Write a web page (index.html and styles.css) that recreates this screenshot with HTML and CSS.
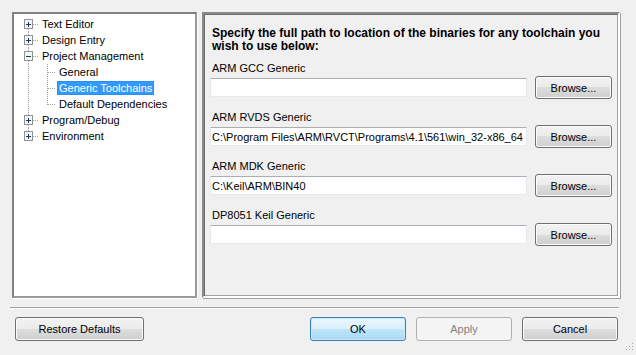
FILE: index.html
```html
<!DOCTYPE html>
<html>

<head>
    <title>Options - Generic Toolchains</title>
    <link rel="stylesheet" href="styles.css">
</head>

<body>
    <div class="main">
        <div class="tree">
            <div class="node">
                <svg class="gutter root" width="26" height="16">
                    <line class="dots" x1="14.5" y1="13" x2="14.5" y2="16" />
                    <line class="dots" x1="19" y1="8.5" x2="25" y2="8.5" />
                    <rect class="box" x="10.5" y="3.5" width="8" height="9" />
                    <path class="sign" d="M12 8.5h5M14.5 6v5" />
                </svg>
                <span class="text">Text Editor</span>
            </div>
            <div class="node">
                <svg class="gutter root" width="26" height="16">
                    <line class="dots" x1="14.5" y1="0" x2="14.5" y2="3" />
                    <line class="dots" x1="14.5" y1="13" x2="14.5" y2="16" />
                    <line class="dots" x1="19" y1="8.5" x2="25" y2="8.5" />
                    <rect class="box" x="10.5" y="3.5" width="8" height="9" />
                    <path class="sign" d="M12 8.5h5M14.5 6v5" />
                </svg>
                <span class="text">Design Entry</span>
            </div>
            <div class="node">
                <svg class="gutter root" width="26" height="16">
                    <line class="dots" x1="14.5" y1="0" x2="14.5" y2="3" />
                    <line class="dots" x1="14.5" y1="13" x2="14.5" y2="16" />
                    <line class="dots" x1="19" y1="8.5" x2="25" y2="8.5" />
                    <rect class="box" x="10.5" y="3.5" width="8" height="9" />
                    <path class="sign" d="M12 8.5h5" />
                </svg>
                <span class="text">Project Management</span>
            </div>
            <div class="node">
                <svg class="gutter child" width="43" height="16">
                    <line class="dots" x1="14.5" y1="0" x2="14.5" y2="16" />
                    <line class="dots" x1="33.5" y1="0" x2="33.5" y2="16" />
                    <line class="dots" x1="34" y1="8.5" x2="42" y2="8.5" />
                </svg>
                <span class="text">General</span>
            </div>
            <div class="node">
                <svg class="gutter child" width="43" height="16">
                    <line class="dots" x1="14.5" y1="0" x2="14.5" y2="16" />
                    <line class="dots" x1="33.5" y1="0" x2="33.5" y2="16" />
                    <line class="dots" x1="34" y1="8.5" x2="42" y2="8.5" />
                </svg>
                <span class="text selected">Generic Toolchains</span>
            </div>
            <div class="node">
                <svg class="gutter child" width="43" height="16">
                    <line class="dots" x1="14.5" y1="0" x2="14.5" y2="16" />
                    <line class="dots" x1="33.5" y1="0" x2="33.5" y2="9" />
                    <line class="dots" x1="34" y1="8.5" x2="42" y2="8.5" />
                </svg>
                <span class="text">Default Dependencies</span>
            </div>
            <div class="node">
                <svg class="gutter root" width="26" height="16">
                    <line class="dots" x1="14.5" y1="0" x2="14.5" y2="3" />
                    <line class="dots" x1="14.5" y1="13" x2="14.5" y2="16" />
                    <line class="dots" x1="19" y1="8.5" x2="25" y2="8.5" />
                    <rect class="box" x="10.5" y="3.5" width="8" height="9" />
                    <path class="sign" d="M12 8.5h5M14.5 6v5" />
                </svg>
                <span class="text">Program/Debug</span>
            </div>
            <div class="node">
                <svg class="gutter root" width="26" height="16">
                    <line class="dots" x1="14.5" y1="0" x2="14.5" y2="3" />
                    <line class="dots" x1="19" y1="8.5" x2="25" y2="8.5" />
                    <rect class="box" x="10.5" y="3.5" width="8" height="9" />
                    <path class="sign" d="M12 8.5h5M14.5 6v5" />
                </svg>
                <span class="text">Environment</span>
            </div>
        </div>

        <div class="panel">
            <p class="intro">Specify the full path to location of the binaries for any toolchain you<br>wish to use below:</p>

            <div class="toolchain">
                <label for="gcc">ARM GCC Generic</label>
                <div class="field">
                    <input type="text" id="gcc" value="">
                    <button class="btn browse">Browse...</button>
                </div>
            </div>

            <div class="toolchain">
                <label for="rvds">ARM RVDS Generic</label>
                <div class="field">
                    <input type="text" id="rvds" value="C:\Program Files\ARM\RVCT\Programs\4.1\561\win_32-x86_64">
                    <button class="btn browse">Browse...</button>
                </div>
            </div>

            <div class="toolchain">
                <label for="mdk">ARM MDK Generic</label>
                <div class="field">
                    <input type="text" id="mdk" value="C:\Keil\ARM\BIN40">
                    <button class="btn browse">Browse...</button>
                </div>
            </div>

            <div class="toolchain">
                <label for="dp8051">DP8051 Keil Generic</label>
                <div class="field">
                    <input type="text" id="dp8051" value="">
                    <button class="btn browse">Browse...</button>
                </div>
            </div>
        </div>
    </div>

    <div class="separator"></div>

    <div class="footer">
        <button class="btn restore">Restore Defaults</button>
        <button class="btn wide default ok">OK</button>
        <button class="btn wide" disabled>Apply</button>
        <button class="btn wide">Cancel</button>
        <svg class="grip" width="9" height="9">
            <rect x="7" y="1" width="1" height="1" class="dot" />
            <rect x="4" y="4" width="1" height="1" class="dot" />
            <rect x="7" y="4" width="1" height="1" class="dot" />
            <rect x="1" y="7" width="1" height="1" class="dot" />
            <rect x="4" y="7" width="1" height="1" class="dot" />
            <rect x="7" y="7" width="1" height="1" class="dot" />
        </svg>
    </div>
</body>

</html>
```

FILE: styles.css
```css
body {
    font-family: "Liberation Sans", Arial, sans-serif;
    font-size: 11px;
    color: #000;
    background-color: #f0f0f0;
    margin: 0;
    padding: 12px 0 0 0;
    width: 636px;
    height: 355px;
    overflow: hidden;
    box-sizing: border-box;
}

.main {
    display: flex;
    gap: 5px;
    padding-left: 12px;
    height: 286px;
}

/* tree view */

.tree {
    width: 185px;
    box-sizing: border-box;
    background-color: #fff;
    border: 2px solid #8c8c8c;
    border-color: #828282 #9a9a9a #9a9a9a #828282;
    box-shadow: 1px 1px 0 #fff;
    padding-top: 2px;
}

.node {
    display: flex;
    align-items: center;
    height: 16px;
}

.gutter {
    flex: none;
    shape-rendering: crispEdges;
}

.dots {
    stroke: #a0a0a0;
    stroke-width: 1;
    stroke-dasharray: 1 1;
}

.box {
    fill: #f4f4f4;
    stroke: #919191;
    stroke-width: 1;
}

.sign {
    stroke: #1e3a6c;
    stroke-width: 1;
    fill: none;
}

.text {
    padding: 0 1px;
    line-height: 12px;
    border: 1px solid transparent;
    white-space: nowrap;
}

.selected {
    background-color: #3399ff;
    color: #fff;
    border: 1px dotted #a86a1a;
}

/* toolchain panel */

.panel {
    width: 418px;
    box-sizing: border-box;
    border: 2px solid;
    border-color: #8a8a8a #ffffff #ffffff #8a8a8a;
    box-shadow: inset 1px 1px 0 #6c6c6c, inset -1px -1px 0 #a0a0a0, 1px 1px 0 #a0a0a0;
    padding: 13px 6px 0 6px;
}

.intro {
    margin: 0 0 9px 0;
    padding-left: 2px;
    font-size: 12px;
    font-weight: bold;
    line-height: 13px;
    white-space: nowrap;
}

.toolchain {
    margin-bottom: 12px;
}

.toolchain label {
    display: block;
    padding-left: 2px;
    line-height: 13px;
    margin-bottom: 1px;
}

.field {
    display: flex;
    align-items: center;
    gap: 8px;
}

.field input {
    width: 317px;
    height: 19px;
    box-sizing: border-box;
    margin: 0;
    padding: 0 1px;
    border: 1px solid #e3e9ef;
    border-top-color: #abadb3;
    border-radius: 1px;
    font-family: "Liberation Sans", Arial, sans-serif;
    font-size: 11px;
    color: #000;
    background-color: #fff;
}

/* buttons */

.btn {
    height: 24px;
    box-sizing: border-box;
    margin: 0;
    padding: 0;
    font-family: "Liberation Sans", Arial, sans-serif;
    font-size: 11px;
    color: #000;
    border: 1px solid #707070;
    border-radius: 3px;
    background: linear-gradient(#f2f2f2, #ebebeb 50%, #dddddd 50%, #cfcfcf);
    box-shadow: inset 0 0 0 1px #fcfcfc;
}

.browse {
    width: 77px;
    height: 23px;
}

.btn.default {
    border-color: #3c7fb1;
    background: linear-gradient(#eaf6fd, #d9f0fc 50%, #bee6fd 50%, #a7d9f5);
    box-shadow: inset 0 0 0 1px #c8ecfc;
}

.btn:disabled {
    color: #838383;
    border-color: #adb2b5;
    background: #f4f4f4;
    box-shadow: none;
}

.separator {
    margin: 9px 0 0 10px;
    width: 609px;
    height: 1px;
    background-color: #a0a0a0;
    border-bottom: 1px solid #fff;
}

.footer {
    display: flex;
    gap: 10px;
    margin-top: 8px;
    padding-left: 15px;
    height: 36px;
}

.restore {
    width: 129px;
}

.wide {
    width: 96px;
}

.ok {
    margin-left: auto;
}

.grip {
    align-self: flex-end;
    margin-left: -3px;
    margin-right: 2px;
    margin-bottom: 2px;
}

.dot {
    fill: #a0a0a0;
}
```
